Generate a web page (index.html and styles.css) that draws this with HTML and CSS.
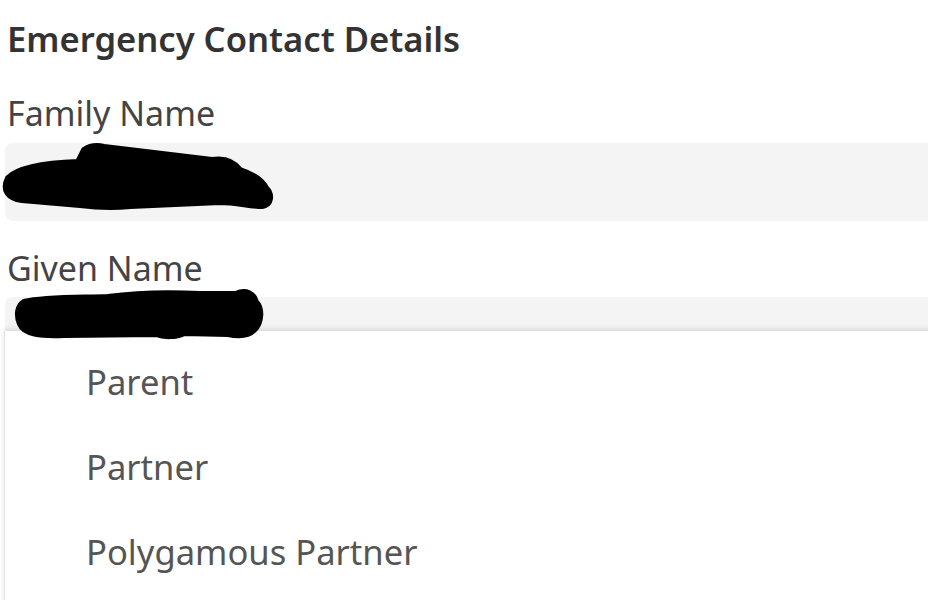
FILE: index.html
```html
<!DOCTYPE html>
<html lang="en">
<head>
    <meta charset="UTF-8">
    <meta name="viewport" content="width=device-width, initial-scale=1.0">
    <title>Emergency Contact Details</title>
    <link rel="stylesheet" href="styles.css">
</head>
<body>
    <div class="page">
        <h2 class="section-title">Emergency Contact Details</h2>

        <div class="form-group">
            <label for="familyName">Family Name</label>
            <input type="text" id="familyName" class="field field-tall">
        </div>

        <div class="form-group select-group">
            <label for="givenName">Given Name</label>
            <input type="text" id="givenName" class="field">

            <ul class="dropdown">
                <li>Parent</li>
                <li>Partner</li>
                <li>Polygamous Partner</li>
            </ul>
        </div>
    </div>

    <!-- redaction marks -->
    <svg class="redact" width="928" height="600" viewBox="0 0 928 600">
        <path d="M8 178 C20 166 50 163 78 162 L84 150 C90 146 96 145 104 147 L212 160 C224 158 234 162 240 170 C252 174 262 180 266 188 C272 194 272 204 262 206 C250 206 236 202 220 202 L130 206 C110 208 96 207 80 205 L22 200 C8 198 2 190 8 178 Z" />
        <path d="M24 302 C44 297 80 298 108 297 C130 294 160 292 200 294 L236 294 C246 289 254 294 256 302 C262 308 262 322 254 330 C248 336 238 336 228 334 L184 333 C176 337 164 337 156 334 L64 335 C40 336 24 334 20 324 C16 314 18 306 24 302 Z" />
    </svg>
</body>
</html>
```

FILE: styles.css
```css
body {
    margin: 0;
    padding: 0;
    background-color: #ffffff;
    font-family: "Noto Sans", "Open Sans", sans-serif;
    overflow: hidden;
    height: 600px;
}

.page {
    padding: 16px 0 0 5px;
}

.section-title {
    margin: 0 0 30px 2px;
    font-size: 34.6px;
    font-weight: 600;
    line-height: 45px;
    color: #333333;
}

.form-group {
    margin-bottom: 25px;
}

label {
    display: block;
    margin: 0 0 8px 2px;
    font-size: 34px;
    line-height: 44px;
    color: #444444;
}

.select-group label {
    margin-bottom: 7px;
}

.field {
    display: block;
    box-sizing: border-box;
    width: calc(100% + 40px);
    height: 78px;
    margin: 0;
    border: none;
    border-radius: 8px;
    background-color: #f4f4f4;
    font-size: 32px;
}

.select-group {
    position: relative;
}

.dropdown {
    position: absolute;
    top: 85px;
    left: -1px;
    right: -40px;
    margin: 0;
    padding: 8px 0 0 0;
    list-style: none;
    background-color: #ffffff;
    border-left: 1px solid #e4e4e4;
    box-shadow: 0 -2px 5px rgba(0, 0, 0, 0.12);
    height: 300px;
}

.dropdown li {
    padding-left: 81px;
    font-size: 34.6px;
    line-height: 85px;
    color: #555555;
}

.redact {
    position: absolute;
    top: 0;
    left: 0;
}

.redact path {
    fill: #000000;
    stroke: #000000;
    stroke-width: 6;
    stroke-linejoin: round;
}
```
